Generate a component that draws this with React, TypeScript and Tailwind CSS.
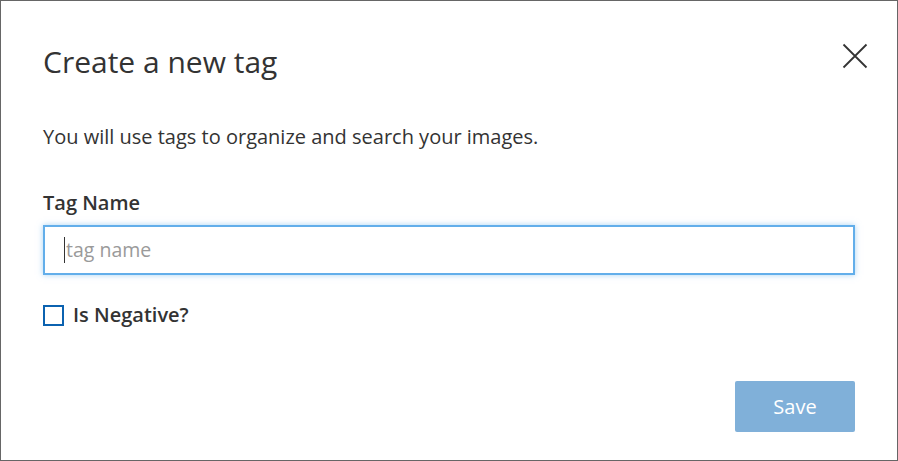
import React from 'react';

const font = { fontFamily: '"Open Sans", "Noto Sans", Arial, sans-serif' };

const CloseIcon: React.FC = () => (
  <svg width="26" height="26" viewBox="0 0 26 26" fill="none">
    <path d="M1.5 1.5 L24.5 24.5 M24.5 1.5 L1.5 24.5" stroke="#333" strokeWidth="1.8" />
  </svg>
);

export default function App() {
  return (
    <div
      style={font}
      className="relative w-[898px] h-[461px] bg-white border border-[#666] overflow-hidden text-[#333]"
    >
      {/* strip of the page behind the dialog */}
      <div className="absolute top-[-1px] left-[610px] w-[75px] h-px bg-[#0b3457]" />

      <div className="flex flex-col px-[42px] pt-[38px]">
        <div className="flex items-start justify-between">
          <h1 className="text-[30px] leading-[46px] font-normal text-[#333]">Create a new tag</h1>
          <button className="mt-[4px] mr-[-13px]" aria-label="Close">
            <CloseIcon />
          </button>
        </div>

        <p className="mt-[38px] text-[20px] leading-[28px]">
          You will use tags to organize and search your images.
        </p>

        <label className="mt-[38px] text-[20px] leading-[28px] font-semibold">Tag Name</label>

        <div className="mt-[8px] h-[50px] border-2 border-[#62aeea] shadow-[0_0_6px_rgba(98,174,234,0.55)] flex items-center pl-[19px]">
          <span className="w-px h-[26px] bg-[#333]" />
          <input
            className="flex-1 outline-none bg-transparent text-[19.5px] text-[#333] placeholder:text-[#9a9a9a] pl-px"
            placeholder="tag name"
            style={font}
          />
        </div>

        <label className="mt-[26px] flex items-center gap-[9px]">
          <span className="w-[21px] h-[21px] border-2 border-[#0b62b0] bg-white" />
          <span className="text-[20px] leading-[28px] font-semibold">Is Negative?</span>
        </label>

        <div className="flex justify-end mt-[52px]">
          <button className="w-[120px] h-[51px] rounded-[2px] bg-[#80b0d9] text-white text-[20px]">
            Save
          </button>
        </div>
      </div>
    </div>
  );
}
